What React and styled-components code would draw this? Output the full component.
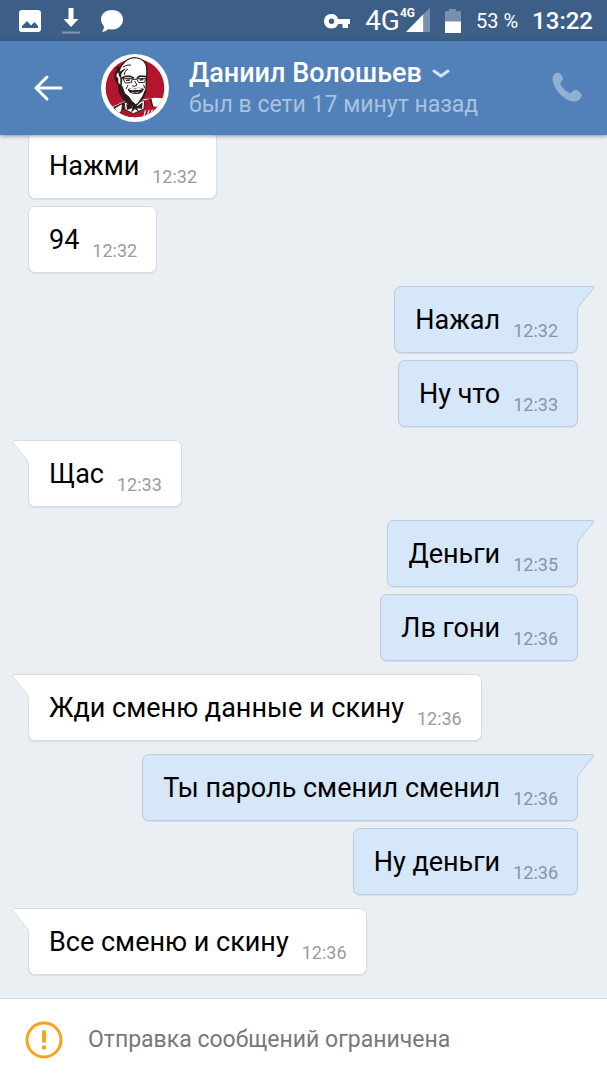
import React from 'react';
import styled, { createGlobalStyle } from 'styled-components'

const GlobalStyle=createGlobalStyle`
    *{
        box-sizing:border-box;
    }
    body{
        margin:0;
        font-family:Roboto,"Noto Sans","Liberation Sans",sans-serif;
        background-color:#eaeff3;
    }
`

const App=styled.div`
    display:flex;
    flex-direction:column;
    height:100vh;
    overflow:hidden;
`

const StatusBar=styled.div`
    display:flex;
    align-items:center;
    justify-content:space-between;
    flex:none;
    height:41px;
    padding:0 14px 0 18px;
    background-color:#3d5f87;
    color:#fff;
`

const StatusIcons=styled.div`
    display:flex;
    align-items:center;
    gap:${({$gap})=>$gap}px;
`

const Signal=styled.div`
    display:flex;
    align-items:flex-start;
`

const Network=styled.span`
    font-size:28px;
    line-height:28px;
`

const NetworkSmall=styled.span`
    font-size:12px;
    line-height:12px;
    font-weight:700;
    margin-right:-9px;
`

const Percent=styled.span`
    font-size:20px;
    line-height:24px;
`

const Clock=styled.time`
    font-size:24px;
    line-height:28px;
    font-weight:500;
`

const Header=styled.header`
    display:flex;
    align-items:center;
    flex:none;
    height:94px;
    padding:0 24px 0 32px;
    background-color:#5181b8;
    box-shadow:0 1px 4px rgba(0,0,0,0.4);
    z-index:1;
`

const IconButton=styled.button`
    display:flex;
    padding:0;
    border:0;
    background:none;
    cursor:pointer;
`

const Avatar=styled.svg`
    display:block;
    width:68px;
    height:68px;
    margin:0 20px 0 37px;
`

const Peer=styled.div`
    flex:1;
    min-width:0;
    padding-top:2px;
`

const Name=styled.h1`
    display:flex;
    align-items:center;
    gap:10px;
    margin:0;
    color:#fff;
    font-size:27px;
    line-height:32px;
    font-weight:500;
    white-space:nowrap;
`

const LastSeen=styled.p`
    margin:0;
    color:#a9c2e0;
    font-size:23px;
    line-height:32px;
    white-space:nowrap;
`

const Messages=styled.main`
    display:flex;
    flex-direction:column;
    justify-content:flex-end;
    gap:13px;
    flex:1;
    min-height:0;
    padding:0 29px 23px 28px;
    overflow:hidden;
`

const Group=styled.section`
    display:flex;
    flex-direction:column;
    flex:none;
    align-items:${({$out})=>$out?'flex-end':'flex-start'};
    gap:7px;
`

const Bubble=styled.div`
    position:relative;
    display:flex;
    align-items:flex-end;
    gap:13px;
    padding:17px 19px 9px 20px;
    border:1px solid ${({$out})=>$out?'#bccde3':'#d9dde3'};
    border-radius:7px;
    background-color:${({$out})=>$out?'#d6e7fa':'#fff'};
    box-shadow:0 1px 1px rgba(80,100,130,0.12);
`

const Text=styled.p`
    margin:0 0 7px;
    color:#000;
    font-size:27px;
    line-height:32px;
`

const Time=styled.time`
    color:${({$out})=>$out?'#8795a8':'#999b9f'};
    font-size:18px;
    line-height:24px;
`

// sits over the top corner of the bubble
const TailIcon=styled.svg`
    position:absolute;
    top:-1px;
    ${({$out})=>$out?'right:-18px;':'left:-18px;transform:scaleX(-1);'}
`

const Footer=styled.footer`
    display:flex;
    align-items:center;
    flex:none;
    gap:25px;
    height:82px;
    padding:0 25px;
    border-top:1px solid #d3d8de;
    background-color:#fff;
    color:#76787c;
    font-size:23px;
    line-height:32px;
`

const Tail=({out})=>(
    <TailIcon $out={out} width='26' height='26' viewBox='0 0 26 26' aria-hidden='true'>
        <path d='M0 0H24.5Q26 .5 25 2L9.6 20.5Q8.5 22 8.5 26H0Z' fill={out?'#d6e7fa':'#fff'} />
        <path d='M0 .5H24Q25.6 .6 24.6 2.1L10 20Q8.5 22 8.5 26' fill='none' stroke={out?'#bccde3':'#d9dde3'} />
    </TailIcon>
)

const Colonel=()=>(
    <Avatar viewBox='18 25 204 204' role='img' aria-label='Даниил Волошьев'>
        <defs>
            <clipPath id='disc'><circle cx='120' cy='127' r='88' /></clipPath>
        </defs>
        <circle cx='120' cy='127' r='102' fill='#fff' />
        <circle cx='120' cy='127' r='88' fill='#b3152e' />
        <g clipPath='url(#disc)'>
            <path d='M50 184L90 166L152 160L180 156L222 160V200L186 230H38Z' fill='#fff' />
            <path d='M56 183L87 169L88 187L113 202L103 230H62L50 207Z' fill='#2b1d1c' />
            <path d='M60 188L81 176L79 195L69 206Z' fill='#fff' />
            <path d='M78 190L116 203L142 192L150 164L168 158L174 182L190 184L184 230H75Z' fill='#b3152e' />
            <path d='M88 170L90 192L115 204L147 190L149 165Z' fill='#fff' stroke='#2b1d1c' strokeWidth='3' />
            <path d='M167 159L173 184' fill='none' stroke='#2b1d1c' strokeWidth='4' />
            <path d='M151 194L147 212M162 193L157 212M172 192L166 210' stroke='#fff' strokeWidth='3.5' />
        </g>
        <path d='M62 66L78 60Q92 36 118 34Q147 36 155 56Q159 68 157 98L154 139L144 161L125 181L106 184L82 160L70 137V118Q58 108 58 94Q59 80 66 70Z' fill='#2b1d1c' />
        <path d='M82 60Q96 39 118 38Q144 39 151 57Q155 68 153 92L151 130L141 153L126 174L113 168L101 152L87 143L80 122L82 100L78 90Q80 78 96 68Q84 70 74 78Q76 68 82 60Z' fill='#fff' />
        <path d='M70 112V98L64 92Q64 84 70 80L72 92L76 96V116Z' fill='#fff' />
        <path d='M84 64Q96 56 108 58M99 70Q88 76 87 88' fill='none' stroke='#2b1d1c' strokeWidth='3' />
        <path d='M80 97L92 92L106 92L117 98M126 97L135 91L153 93' fill='none' stroke='#2b1d1c' strokeWidth='5' />
        <path d='M84 99H112L109 111L91 112ZM125 99H152L149 110L131 111Z' fill='#fff' stroke='#2b1d1c' strokeWidth='3' />
        <path d='M112 101H125' stroke='#2b1d1c' strokeWidth='3' />
        <path d='M93 104L105 103M134 103L145 102' stroke='#2b1d1c' strokeWidth='4' />
        <path d='M119 106L126 118L119 122L111 120M99 118L93 130M146 117L149 128' fill='none' stroke='#2b1d1c' strokeWidth='3' />
        <path d='M98 131Q109 123 120 128Q134 123 147 130Q142 143 128 145Q108 147 101 137Z' fill='#2b1d1c' />
        <path d='M102 130Q112 124 120 129Q132 125 143 130Q130 135 120 132Q108 136 102 130Z' fill='#fff' />
        <path d='M109 138Q121 143 135 137L128 141H113Z' fill='#fff' />
        <path d='M80 122L88 144L101 156L111 174' fill='none' stroke='#2b1d1c' strokeWidth='5' />
        <path d='M112 147L120 150L135 145L137 151L129 170L121 176L112 163Z' fill='#fff' />
        <path d='M94 174L112 184L120 178L127 182L143 170L141 190L127 187L132 199L120 190L108 201L112 187L96 193Z' fill='#2b1d1c' />
    </Avatar>
)

const groups=[
    {out:false,tail:false,items:[['Нажми','12:32'],['94','12:32']]},
    {out:true,tail:true,items:[['Нажал','12:32'],['Ну что','12:33']]},
    {out:false,tail:true,items:[['Щас','12:33']]},
    {out:true,tail:true,items:[['Деньги','12:35'],['Лв гони','12:36']]},
    {out:false,tail:true,items:[['Жди сменю данные и скину','12:36']]},
    {out:true,tail:true,items:[['Ты пароль сменил сменил','12:36'],['Ну деньги','12:36']]},
    {out:false,tail:true,items:[['Все сменю и скину','12:36']]},
];

const Dialog=()=>{
    return(
    <App>
    <GlobalStyle />
    <StatusBar>
        <StatusIcons $gap={19}>
            <svg width='24' height='24' viewBox='0 0 24 24'>
                <path fillRule='evenodd' fill='#fff' d='M4 1H20Q23 1 23 4V20Q23 23 20 23H4Q1 23 1 20V4Q1 1 4 1ZM4 19H20V17L16.500 13L13 16.500L9 12L4 17Z' />
            </svg>
            <svg width='20' height='26' viewBox='0 0 20 26'>
                <path fill='#fff' d='M7.500 0H12.500V11H17.500L10 19L2.500 11H7.500Z' />
                <path fill='#7f98b4' d='M1 23.500H19V25.500H1Z' />
            </svg>
            <svg width='24' height='24' viewBox='0 0 24 24'>
                <path fill='#fff' d='M12 1C18.500 1 23 5 23 10.500S18.500 20.500 12 20.500Q10 20.500 8.500 20Q6 22.500 2 23Q4 20.500 4 17.500Q1 14.500 1 10.500C1 5 5.500 1 12 1Z' />
            </svg>
        </StatusIcons>
        <StatusIcons $gap={14}>
            <svg width='28' height='18' viewBox='0 0 28 18'>
                <path fill='#fff' fillRule='evenodd' d='M8.500 2Q13.500 2 15 7H27V12H25V16H19.500V12H15Q13.500 16.500 8.500 16.500Q1 16 1 9.200T8.500 2ZM8.500 6.500A2.700 2.700 0 1 0 8.500 12A2.700 2.700 0 1 0 8.500 6.500Z' />
            </svg>
            <Signal>
                <Network>4G</Network>
                <NetworkSmall>4G</NetworkSmall>
                <svg width='24' height='26' viewBox='0 0 24 26'>
                    <path fill='#fff' d='M0 25L17.500 7V25Z' />
                    <path fill='#7890ad' d='M17.500 7L24 1V25H17.500Z' />
                </svg>
            </Signal>
            <svg width='18' height='26' viewBox='0 0 18 26'>
                <path fill='#7890ad' d='M5 1H12V3H17V14H1V3H5Z' />
                <path fill='#fff' d='M1 13.500H17V25H1Z' />
            </svg>
            <Percent>53 %</Percent>
            <Clock>13:22</Clock>
        </StatusIcons>
    </StatusBar>
    <Header>
        <IconButton type='button' aria-label='Назад'>
            <svg width='32' height='28' viewBox='0 0 32 28' fill='none' stroke='#fff' strokeWidth='3' strokeLinecap='round' strokeLinejoin='round'>
                <path d='M29 14H4M15 3L4 14L15 25' />
            </svg>
        </IconButton>
        <Colonel />
        <Peer>
            <Name>
                Даниил Волошьев
                <svg width='18' height='12' viewBox='0 0 18 12' fill='none' stroke='#d5e2f0' strokeWidth='3' strokeLinecap='round' strokeLinejoin='round'>
                    <path d='M2 4L9 9L16 4' />
                </svg>
            </Name>
            <LastSeen>был в сети 17 минут назад</LastSeen>
        </Peer>
        <IconButton type='button' aria-label='Позвонить'>
            <svg width='32' height='32' viewBox='0 0 32 32'>
                <path fill='#91b0d5' d='M5 1Q8 0 10.500 3Q13.500 7 10.500 9.500Q8.500 11 10 13.500Q13 18 17.500 20.500Q19.500 21.500 21 20Q24 16.500 28 19.500Q32 22.500 30 25.500Q27.500 30 22 29.500Q14.500 28.500 8 21Q1.500 13 1.500 7Q1.500 3 5 1Z' />
            </svg>
        </IconButton>
    </Header>
    <Messages>
        {groups.map((group,index)=>(
            <Group key={index} $out={group.out}>
                {group.items.map(([text,time],i)=>(
                    <Bubble key={i} $out={group.out}>
                        {group.tail&&i===0&&<Tail out={group.out} />}
                        <Text>{text}</Text>
                        <Time $out={group.out}>{time}</Time>
                    </Bubble>
                ))}
            </Group>
        ))}
    </Messages>
    <Footer>
        <svg width='38' height='38' viewBox='0 0 38 38' fill='none' stroke='#faa21b' strokeWidth='3' strokeLinecap='round'>
            <circle cx='19' cy='19' r='17' />
            <path d='M19 11V20' strokeWidth='4' />
            <circle cx='19' cy='26.500' r='2.300' fill='#faa21b' stroke='none' />
        </svg>
        <span>Отправка сообщений ограничена</span>
    </Footer>
    </App>
    )
}

export default Dialog;
